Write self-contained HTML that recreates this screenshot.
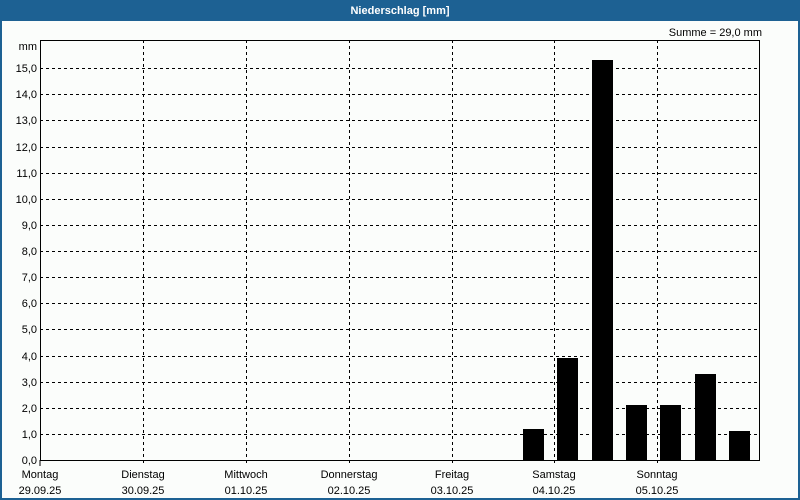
<!DOCTYPE html>
<html><head><meta charset="utf-8"><style>
html,body{margin:0;padding:0;width:800px;height:500px;overflow:hidden;background:#fbfdfb}
svg{display:block}
text{font-family:"Liberation Sans",sans-serif;font-size:11px;fill:#000}
</style></head><body>
<svg width="800" height="500" viewBox="0 0 800 500" xmlns="http://www.w3.org/2000/svg">
<rect x="0" y="0" width="800" height="500" fill="#1d6193"/>
<rect x="2" y="21" width="796" height="477" fill="#fbfdfb"/>
<text x="400" y="14" text-anchor="middle" style="fill:#fff;font-weight:bold">Niederschlag [mm]</text>
<text x="762" y="36" text-anchor="end">Summe = 29,0 mm</text>
<g stroke="#000" stroke-width="1" stroke-dasharray="3,3" shape-rendering="crispEdges">
<line x1="40" x2="760" y1="434.5" y2="434.5"/><line x1="40" x2="760" y1="408.5" y2="408.5"/>
<line x1="40" x2="760" y1="382.5" y2="382.5"/><line x1="40" x2="760" y1="356.5" y2="356.5"/>
<line x1="40" x2="760" y1="329.5" y2="329.5"/><line x1="40" x2="760" y1="303.5" y2="303.5"/>
<line x1="40" x2="760" y1="277.5" y2="277.5"/><line x1="40" x2="760" y1="251.5" y2="251.5"/>
<line x1="40" x2="760" y1="225.5" y2="225.5"/><line x1="40" x2="760" y1="199.5" y2="199.5"/>
<line x1="40" x2="760" y1="173.5" y2="173.5"/><line x1="40" x2="760" y1="147.5" y2="147.5"/>
<line x1="40" x2="760" y1="120.5" y2="120.5"/><line x1="40" x2="760" y1="94.5" y2="94.5"/>
<line x1="40" x2="760" y1="68.5" y2="68.5"/>
<line x1="143.5" x2="143.5" y1="40" y2="466"/><line x1="246.5" x2="246.5" y1="40" y2="466"/>
<line x1="349.5" x2="349.5" y1="40" y2="466"/><line x1="452.5" x2="452.5" y1="40" y2="466"/>
<line x1="554.5" x2="554.5" y1="40" y2="466"/><line x1="657.5" x2="657.5" y1="40" y2="466"/>
</g>
<g fill="#000" shape-rendering="crispEdges">
<rect x="523" y="429" width="21" height="31"/>
<rect x="557" y="358" width="21" height="102"/>
<rect x="592" y="60" width="21" height="400"/>
<rect x="626" y="405" width="21" height="55"/>
<rect x="660" y="405" width="21" height="55"/>
<rect x="695" y="374" width="21" height="86"/>
<rect x="729" y="431" width="21" height="29"/>
</g>
<rect x="40.5" y="40.5" width="719" height="420" fill="none" stroke="#000" stroke-width="1" shape-rendering="crispEdges"/>
<line x1="40" x2="40" y1="460" y2="466" stroke="#000" shape-rendering="crispEdges"/>
<g text-anchor="end">
<text x="37" y="50">mm</text>
<text x="37" y="464">0,0</text><text x="37" y="438">1,0</text><text x="37" y="412">2,0</text>
<text x="37" y="386">3,0</text><text x="37" y="360">4,0</text><text x="37" y="333">5,0</text>
<text x="37" y="307">6,0</text><text x="37" y="281">7,0</text><text x="37" y="255">8,0</text>
<text x="37" y="229">9,0</text><text x="37" y="203">10,0</text><text x="37" y="177">11,0</text>
<text x="37" y="151">12,0</text><text x="37" y="124">13,0</text><text x="37" y="98">14,0</text>
<text x="37" y="72">15,0</text>
</g>
<g text-anchor="middle">
<text x="40" y="478">Montag</text><text x="40" y="494">29.09.25</text>
<text x="143" y="478">Dienstag</text><text x="143" y="494">30.09.25</text>
<text x="246" y="478">Mittwoch</text><text x="246" y="494">01.10.25</text>
<text x="349" y="478">Donnerstag</text><text x="349" y="494">02.10.25</text>
<text x="452" y="478">Freitag</text><text x="452" y="494">03.10.25</text>
<text x="554" y="478">Samstag</text><text x="554" y="494">04.10.25</text>
<text x="657" y="478">Sonntag</text><text x="657" y="494">05.10.25</text>
</g>
</svg>
</body></html>
